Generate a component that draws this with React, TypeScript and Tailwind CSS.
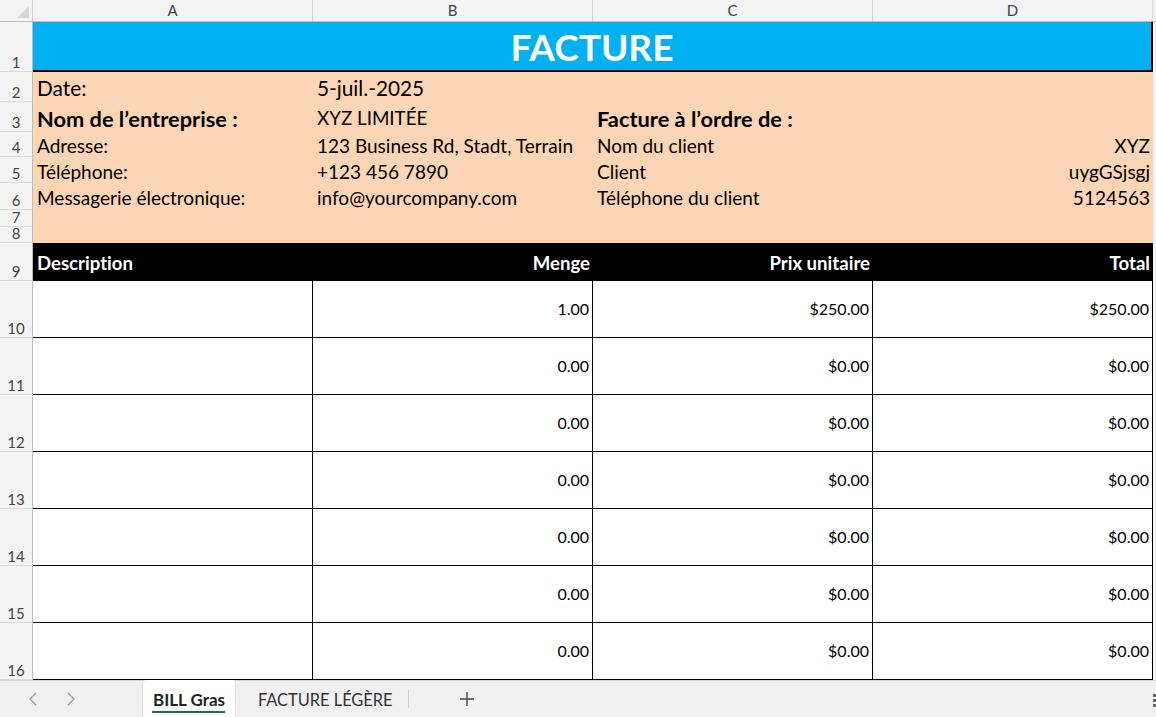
import React from 'react'

const FONT = { fontFamily: 'Lato, "Liberation Sans", sans-serif', fontVariantLigatures: 'none' as const }

const hClass: Record<number, string> = {
  1: 'h-[50px]', 2: 'h-[30px]', 3: 'h-[30px]', 4: 'h-[25px]', 5: 'h-[26px]', 6: 'h-[27px]',
  7: 'h-[17px]', 8: 'h-[16px]', 9: 'h-[38px]', 10: 'h-[57px]', 11: 'h-[57px]', 12: 'h-[57px]',
  13: 'h-[57px]', 14: 'h-[57px]', 15: 'h-[57px]', 16: 'h-[57px]',
}

const items = [
  { qty: '1.00', price: '$250.00', total: '$250.00' },
  { qty: '0.00', price: '$0.00', total: '$0.00' },
  { qty: '0.00', price: '$0.00', total: '$0.00' },
  { qty: '0.00', price: '$0.00', total: '$0.00' },
  { qty: '0.00', price: '$0.00', total: '$0.00' },
  { qty: '0.00', price: '$0.00', total: '$0.00' },
  { qty: '0.00', price: '$0.00', total: '$0.00' },
]

function RowNum({ n }: { n: number }) {
  return (
    <div className={`${hClass[n]} w-[33px] shrink-0 flex items-end justify-center pb-[1px] text-[15px] leading-none text-[#444] bg-[#f3f3f3] border-r border-r-[#bcbcbc] border-b border-b-[#dadada]`}>
      {n}
    </div>
  )
}

export default function App() {
  return (
    <div className="w-[1156px] h-[717px] overflow-hidden bg-[#f3f3f3] flex flex-col text-black" style={FONT}>
      {/* column letters */}
      <div className="flex h-[22px] shrink-0 border-b border-[#bcbcbc]">
        <div className="w-[33px] shrink-0 relative border-r border-[#d0d0d0]">
          <svg className="absolute right-[3px] bottom-[3px]" width="12" height="12" viewBox="0 0 12 12">
            <polygon points="12,0 12,12 0,12" fill="#d6d6d6" />
          </svg>
        </div>
        {['A', 'B', 'C', 'D'].map(c => (
          <div key={c} className="w-[280px] shrink-0 flex items-center justify-center text-[15px] text-[#444] border-r border-[#d6d6d6]">
            {c}
          </div>
        ))}
      </div>

      {/* row 1 title */}
      <div className="flex">
        <RowNum n={1} />
        <div className="w-[1120px] h-[50px] bg-[#00b0f0] border-b-2 border-r-2 border-black flex items-center justify-center text-white font-bold text-[37px] leading-none">
          FACTURE
        </div>
      </div>

      {/* info block rows 2..8 */}
      <div className="flex">
        <div className="flex flex-col">
          {[2, 3, 4, 5, 6, 7, 8].map(n => <RowNum key={n} n={n} />)}
        </div>
        <div className="w-[1120px] bg-[#fcd5b4] flex flex-col">
          <div className="h-[30px] flex items-center text-[20.8px] leading-none">
            <div className="w-[280px] pl-[4px] pt-[2px]">Date:</div>
            <div className="w-[280px] pl-[4px] pt-[2px]">5-juil.-2025</div>
          </div>
          <div className="h-[30px] flex items-center leading-none pt-[3px]">
            <div className="w-[280px] pl-[4px] text-[21.8px] font-bold whitespace-nowrap">Nom de l’entreprise :</div>
            <div className="w-[280px] pl-[4px] text-[18.8px]">XYZ LIMITÉE</div>
            <div className="w-[280px] pl-[4px] text-[21.8px] font-bold whitespace-nowrap">Facture à l’ordre de :</div>
          </div>
          {[
            ['Adresse:', '123 Business Rd, Stadt, Terrain', 'Nom du client', 'XYZ', 'h-[25px]'],
            ['Téléphone:', '+123 456 7890', 'Client', 'uygGSjsgj', 'h-[26px]'],
            ['Messagerie électronique:', 'info@yourcompany.com', 'Téléphone du client', '5124563', 'h-[27px]'],
          ].map(r => (
            <div key={r[0]} className={`${r[4]} flex items-center text-[19px] leading-none pt-[2px]`}>
              <div className="w-[280px] pl-[4px] whitespace-nowrap">{r[0]}</div>
              <div className="w-[280px] pl-[4px] whitespace-nowrap">{r[1]}</div>
              <div className="w-[280px] pl-[4px] whitespace-nowrap">{r[2]}</div>
              <div className="w-[280px] pr-[3px] text-right whitespace-nowrap">{r[3]}</div>
            </div>
          ))}
          <div className="h-[33px]" />
        </div>
      </div>

      {/* row 9 header */}
      <div className="flex">
        <RowNum n={9} />
        <div className="w-[1120px] h-[38px] bg-black text-white font-bold text-[18.6px] leading-none flex items-center pt-[3px]">
          <div className="w-[280px] pl-[4px]">Description</div>
          <div className="w-[280px] pr-[3px] text-right">Menge</div>
          <div className="w-[280px] pr-[3px] text-right">Prix unitaire</div>
          <div className="w-[280px] pr-[3px] text-right">Total</div>
        </div>
      </div>

      {/* item rows */}
      {items.map((it, i) => {
        const n = 10 + i
        return (
          <div key={n} className="flex">
            <RowNum n={n} />
            <div className={`w-[1120px] ${hClass[n]} bg-white flex text-[16px] border-b border-black`}>
              <div className="w-[280px] border-r border-black" />
              <div className="w-[280px] border-r border-black flex items-center justify-end pr-[3px]">{it.qty}</div>
              <div className="w-[280px] border-r border-black flex items-center justify-end pr-[3px]">{it.price}</div>
              <div className="w-[280px] border-r border-black flex items-center justify-end pr-[3px]">{it.total}</div>
            </div>
          </div>
        )
      })}

      {/* sheet tabs */}
      <div className="flex-1 flex items-stretch bg-[#f0f0f0] border-t border-[#d6d6d6] relative">
        <div className="w-[123px] flex items-center pl-[28px] gap-[28px] text-[#9a9a9a]">
          <svg width="10" height="16" viewBox="0 0 10 16"><path d="M8 2 L2 8 L8 14" fill="none" stroke="#9a9a9a" strokeWidth="1.3" /></svg>
          <svg width="10" height="16" viewBox="0 0 10 16"><path d="M2 2 L8 8 L2 14" fill="none" stroke="#9a9a9a" strokeWidth="1.3" /></svg>
        </div>
        <div className="ml-[19px] w-[94px] -mt-[1px] bg-white rounded-t-[4px] border-x border-[#e0e0e0] flex flex-col items-center justify-center relative">
          <span className="text-[17px] font-bold text-[#222] leading-none mt-[2px]">BILL Gras</span>
          <div className="absolute bottom-[4px] left-[9px] right-[10px] h-[2px] bg-[#1e7145]" />
        </div>
        <div className="w-[172px] flex items-center pl-[22px] text-[16.4px] text-[#333] pt-[3px]">
          FACTURE LÉGÈRE
        </div>
        <div className="my-[9px] w-px bg-[#cfcfcf]" />
        <div className="ml-[51px] flex items-center">
          <svg width="14" height="14" viewBox="0 0 14 14"><path d="M7 0 V14 M0 7 H14" stroke="#444" strokeWidth="1.4" /></svg>
        </div>
        <div className="absolute right-[0px] top-[13px] flex flex-col gap-[2px]">
          <div className="w-[3px] h-[3px] bg-[#666]" />
          <div className="w-[3px] h-[3px] bg-[#666]" />
          <div className="w-[3px] h-[3px] bg-[#666]" />
        </div>
      </div>
    </div>
  )
}
